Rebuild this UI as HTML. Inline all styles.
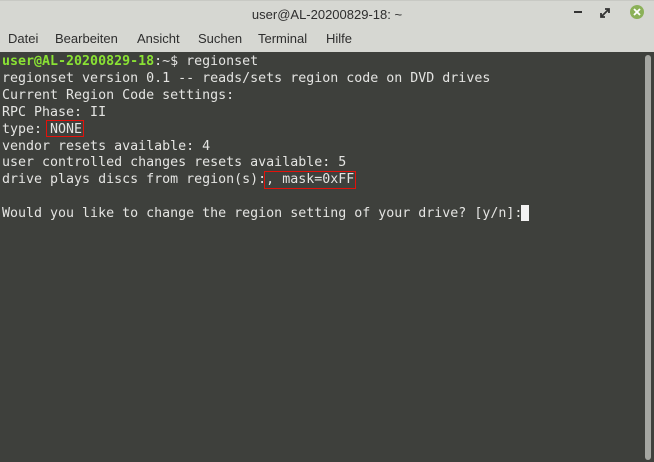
<!DOCTYPE html>
<html><head><meta charset="utf-8"><style>
*{margin:0;padding:0;box-sizing:border-box}
body{width:654px;height:462px;overflow:hidden;background:#3e403c;font-family:"Liberation Sans",sans-serif;position:relative}
#title{position:absolute;left:0;top:0;width:654px;height:27px;background:#d6d7d2;text-align:center;font-size:13px;line-height:27px;color:#2e2e2e;border-top:1px solid #c8c9c4}
#menu{position:absolute;left:0;top:27px;width:654px;height:25px;background:#d6d7d2;font-size:13px;line-height:24px;color:#2e2e2e}
#menu span{position:absolute;top:0}
#term{position:absolute;left:0;top:52px;width:654px;height:410px;background:#3e403c}
pre{position:absolute;left:2px;top:2px;font-family:"DejaVu Sans Mono","Liberation Mono",monospace;font-size:13.3px;line-height:16.9px;color:#e4e4e2;font-weight:normal}
.g{color:#8ae234;font-weight:bold}
.box{position:absolute;border:1.5px solid #e3120b}
#sb{position:absolute;left:645px;top:55px;width:6px;height:405px;background:#a5a7a2;border-radius:3px}
#cur{position:absolute;left:521px;top:205px;width:8px;height:16px;background:#f2f2f2}
</style></head><body>
<div id="title">user@AL-20200829-18: ~</div>
<div style="position:absolute;left:574px;top:11px;width:8px;height:2px;background:#333"></div>
<svg style="position:absolute;left:600px;top:8px" width="10" height="10"><path d="M1 9L9 1M5 1h4v4M1 5v4h4" stroke="#333" stroke-width="1.8" fill="none"/></svg>
<div style="position:absolute;left:630px;top:5px;width:14px;height:14px;border-radius:7px;background:#8bb158"></div>
<svg style="position:absolute;left:633px;top:8px" width="8" height="8"><path d="M1 1L7 7M7 1L1 7" stroke="#fff" stroke-width="1.8"/></svg>
<div id="menu"><span style="left:8px">Datei</span><span style="left:55px">Bearbeiten</span><span style="left:137px">Ansicht</span><span style="left:198px">Suchen</span><span style="left:258px">Terminal</span><span style="left:326px">Hilfe</span></div>
<div id="term">
<pre><span class="g">user@AL-20200829-18</span>:~$ regionset
regionset version 0.1 -- reads/sets region code on DVD drives
Current Region Code settings:
RPC Phase: II
type: NONE
vendor resets available: 4
user controlled changes resets available: 5
drive plays discs from region(s):, mask=0xFF

Would you like to change the region setting of your drive? [y/n]:</pre>
</div>
<div class="box" style="left:46px;top:120px;width:38px;height:17px"></div>
<div class="box" style="left:264px;top:171px;width:92px;height:18px"></div>
<div id="cur"></div>
<div id="sb"></div>
</body></html>
